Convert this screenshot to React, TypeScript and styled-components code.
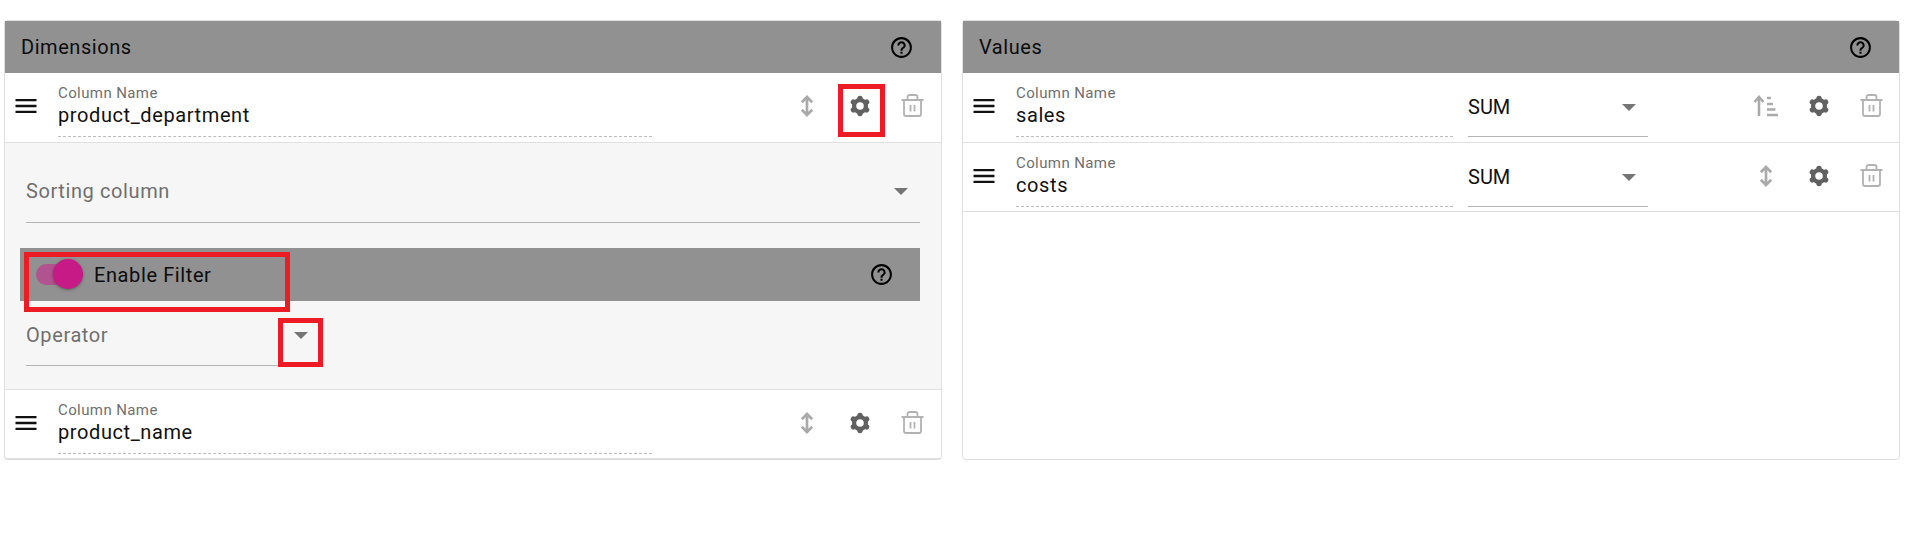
import * as React from 'react'
import styled, { createGlobalStyle } from 'styled-components'

const GlobalStyle = createGlobalStyle`
  html, body {
    margin: 0;
    padding: 0;
    background: #ffffff;
    font-family: Roboto, "Liberation Sans", sans-serif;
  }
`

const Page = styled.div`
  display: grid;
  grid-template-columns: 938px 938px;
  column-gap: 20px;
  padding: 20px 7px 0 4px;
  height: 523px;
  box-sizing: border-box;
  align-items: start;
`

const Panel = styled.section<{ $raised?: boolean }>`
  position: relative;
  box-sizing: border-box;
  height: 440px;
  background: #ffffff;
  border: 1px solid #e0e0e0;
  border-radius: 4px;
  ${(p) => p.$raised && 'border-bottom: 2px solid #dcdcdc;'}
`

const Bar = styled.header<{ $inset?: boolean }>`
  display: flex;
  align-items: center;
  height: 52px;
  background: #919191;
  color: #0c0c0c;
  padding-left: 16px;
  ${(p) => p.$inset && 'height: 53px;'}
`

const BarTitle = styled.h2`
  flex: 1;
  margin: 0;
  font-size: 20px;
  font-weight: 400;
  letter-spacing: 0.55px;
`

const HelpSlot = styled.span<{ $right: number }>`
  display: flex;
  margin-right: ${(p) => p.$right}px;
  color: #000000;
`

const Row = styled.div<{ $height: number }>`
  display: flex;
  align-items: flex-start;
  height: ${(p) => p.$height}px;
  box-sizing: border-box;
  border-bottom: 1px solid #e0e0e0;
`

const Grip = styled.span`
  flex: 0 0 53px;
  height: 65px;
  padding-right: 11px;
  box-sizing: border-box;
  display: flex;
  align-items: center;
  justify-content: center;
  color: #111111;
`

const Field = styled.div<{ $width: number }>`
  width: ${(p) => p.$width}px;
  height: 64px;
  box-sizing: border-box;
  padding-top: 10px;
  border-bottom: 1px dashed #bdbdbd;
`

const FieldLabel = styled.div`
  font-size: 15px;
  line-height: 20px;
  letter-spacing: 0.4px;
  color: #6f6f6f;
`

const FieldValue = styled.div`
  font-size: 20px;
  line-height: 24px;
  letter-spacing: 0.6px;
  color: #111111;
`

const Dropdown = styled.div<{ $width?: number; $height: number; $inset?: number; $drop: number }>`
  display: flex;
  align-items: center;
  justify-content: space-between;
  box-sizing: border-box;
  width: ${(p) => (p.$width ? `${p.$width}px` : 'auto')};
  height: ${(p) => p.$height}px;
  margin-left: ${(p) => p.$inset ?? 0}px;
  padding-top: ${(p) => p.$drop}px;
  border-bottom: 1px solid #b4b4b4;
`

const DropdownText = styled.span<{ $muted?: boolean }>`
  font-size: 20px;
  letter-spacing: ${(p) => (p.$muted ? '0.6px' : '0')};
  color: ${(p) => (p.$muted ? '#6f6f6f' : '#111111')};
`

const Caret = styled.span`
  width: 0;
  height: 0;
  margin-right: 12px;
  border-left: 7px solid transparent;
  border-right: 7px solid transparent;
  border-top: 7px solid #757575;
`

const Actions = styled.div<{ $edge: number }>`
  display: flex;
  margin-left: auto;
  padding-right: ${(p) => p.$edge}px;
`

const ActionButton = styled.span<{ $tone: string }>`
  width: 53px;
  height: 65px;
  display: flex;
  align-items: center;
  justify-content: center;
  color: ${(p) => p.$tone};
`

const Details = styled.div`
  height: 247px;
  box-sizing: border-box;
  padding: 17px 21px 0 15px;
  background: #f6f6f6;
  border-bottom: 1px solid #e0e0e0;
`

const SortingGap = styled.div`
  height: 25px;
`

const Track = styled.span`
  position: relative;
  display: block;
  width: 33px;
  height: 21px;
  margin-right: 25px;
  border-radius: 11px;
  background: #b0538f;
`

const Thumb = styled.span`
  position: absolute;
  left: 17px;
  top: -5px;
  width: 30px;
  height: 30px;
  border-radius: 50%;
  background: #c71a87;
  box-shadow: 0 1px 3px rgba(0, 0, 0, 0.35);
`

const FilterTitle = styled.span`
  flex: 1;
  font-size: 20px;
  letter-spacing: 0.6px;
  color: #0c0c0c;
`

const Mark = styled.span<{ $top: number; $left: number; $w: number; $h: number }>`
  position: absolute;
  top: ${(p) => p.$top}px;
  left: ${(p) => p.$left}px;
  width: ${(p) => p.$w}px;
  height: ${(p) => p.$h}px;
  box-sizing: border-box;
  border: 5px solid #ed1c24;
  pointer-events: none;
`

const HelpIcon = () => (
  <svg width="25" height="25" viewBox="0 0 24 24" fill="currentColor">
    <path d="M11 18h2v-2h-2v2zm1-16C6.48 2 2 6.48 2 12s4.48 10 10 10 10-4.48 10-10S17.52 2 12 2zm0 18c-4.41 0-8-3.59-8-8s3.59-8 8-8 8 3.59 8 8-3.59 8-8 8zm0-14c-2.21 0-4 1.79-4 4h2c0-1.1.9-2 2-2s2 .9 2 2c0 2-3 1.75-3 5h2c0-2.25 3-2.5 3-5 0-2.21-1.79-4-4-4z" />
  </svg>
)

const MenuIcon = () => (
  <svg width="28" height="28" viewBox="0 0 24 24" fill="currentColor">
    <path d="M3 18h18v-2H3v2zm0-5h18v-2H3v2zm0-7v2h18V6H3z" />
  </svg>
)

// six fat lobes round a ring, the stock settings glyph is too spiky here
const GearIcon = () => (
  <svg width="22" height="22" viewBox="0 0 22 22" fill="none" stroke="currentColor">
    <circle cx="11" cy="11" r="5.9" strokeWidth="4.2" />
    {[0, 60, 120].map((a) => (
      <g key={a} transform={`rotate(${a} 11 11)`} strokeWidth="5.4" strokeLinecap="round">
        <path d="M11 3.6v-.2M11 18.4v.2" />
      </g>
    ))}
  </svg>
)

const HeightIcon = () => (
  <svg width="14" height="24" viewBox="0 0 14 24" fill="none" stroke="currentColor" strokeWidth="2.7">
    <path d="M7 3v18M1.8 8.2 7 3l5.2 5.2M1.8 15.8 7 21l5.2-5.2" />
  </svg>
)

const SortIcon = () => (
  <svg width="26" height="24" viewBox="0 0 26 24" fill="none" stroke="currentColor" strokeWidth="2.6">
    <path d="M6 22V3M1.5 8 6 3l4.5 5M14 4h4M14 10h6M14 15.5h8.5M14 21h11" />
  </svg>
)

const TrashIcon = () => (
  <svg width="23" height="23" viewBox="0 0 23 23" fill="none" stroke="currentColor" strokeWidth="1.8">
    <path d="M.5 6h22M3 6v14a2 2 0 0 0 2 2h13a2 2 0 0 0 2-2V6M6.5 6V3a2 2 0 0 1 2-2h6a2 2 0 0 1 2 2v3M9.5 11v6.5M13.5 11v6.5" />
  </svg>
)

const RowActions: React.FC<{ sort?: boolean; edge: number }> = ({ sort, edge }) => (
  <Actions $edge={edge}>
    <ActionButton $tone="#aaaaaa">{sort ? <SortIcon /> : <HeightIcon />}</ActionButton>
    <ActionButton $tone="#616161">
      <GearIcon />
    </ActionButton>
    <ActionButton $tone="#b2b2b2">
      <TrashIcon />
    </ActionButton>
  </Actions>
)

const DimensionRow: React.FC<{ name: string; height: number }> = ({ name, height }) => (
  <Row $height={height}>
    <Grip>
      <MenuIcon />
    </Grip>
    <Field $width={594}>
      <FieldLabel>Column Name</FieldLabel>
      <FieldValue>{name}</FieldValue>
    </Field>
    <RowActions edge={2} />
  </Row>
)

const ValueRow: React.FC<{ name: string; height: number; sort?: boolean }> = ({ name, height, sort }) => (
  <Row $height={height}>
    <Grip>
      <MenuIcon />
    </Grip>
    <Field $width={437}>
      <FieldLabel>Column Name</FieldLabel>
      <FieldValue>{name}</FieldValue>
    </Field>
    <Dropdown $width={180} $height={64} $inset={15} $drop={5}>
      <DropdownText>SUM</DropdownText>
      <Caret />
    </Dropdown>
    <RowActions sort={sort} edge={1} />
  </Row>
)

export default function App() {
  return (
    <Page>
      <GlobalStyle />
      <Panel $raised>
        <Bar>
          <BarTitle>Dimensions</BarTitle>
          <HelpSlot $right={27}>
            <HelpIcon />
          </HelpSlot>
        </Bar>
        <DimensionRow name="product_department" height={70} />
        <Details>
          <Dropdown $height={63} $inset={6} $drop={0}>
            <DropdownText $muted>Sorting column</DropdownText>
            <Caret />
          </Dropdown>
          <SortingGap />
          <Bar $inset>
            <Track>
              <Thumb />
            </Track>
            <FilterTitle>Enable Filter</FilterTitle>
            <HelpSlot $right={26}>
              <HelpIcon />
            </HelpSlot>
          </Bar>
          <Dropdown $width={294} $height={65} $inset={6} $drop={4}>
            <DropdownText $muted>Operator</DropdownText>
            <Caret />
          </Dropdown>
        </Details>
        <DimensionRow name="product_name" height={69} />
        <Mark $top={63} $left={833} $w={47} $h={53} />
        <Mark $top={231} $left={19} $w={266} $h={60} />
        <Mark $top={297} $left={273} $w={45} $h={49} />
      </Panel>
      <Panel>
        <Bar>
          <BarTitle>Values</BarTitle>
          <HelpSlot $right={26}>
            <HelpIcon />
          </HelpSlot>
        </Bar>
        <ValueRow name="sales" height={70} sort />
        <ValueRow name="costs" height={69} />
      </Panel>
    </Page>
  )
}
